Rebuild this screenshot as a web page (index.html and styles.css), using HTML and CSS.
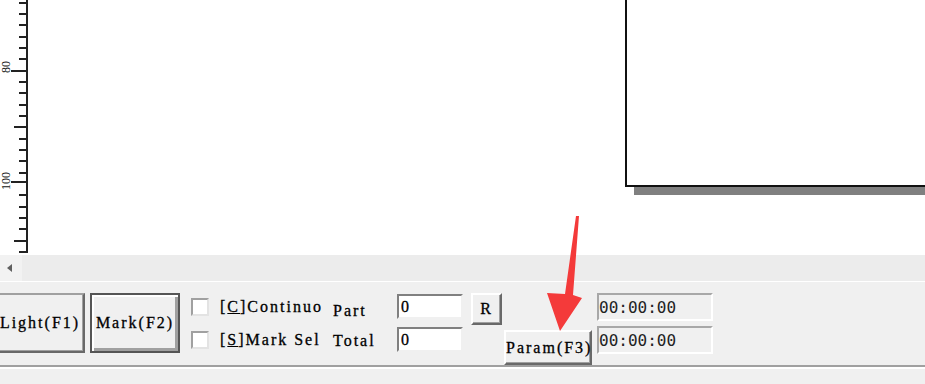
FILE: index.html
```html
<!DOCTYPE html>
<html lang="en">
<head>
<meta charset="UTF-8">
<title>Marking</title>
<link rel="stylesheet" href="styles.css">
</head>
<body>

<div class="canvas">
  <!-- vertical ruler -->
  <svg class="ruler" width="40" height="255" viewBox="0 0 40 255">
    <line x1="27" y1="0" x2="27" y2="253" stroke="#222" stroke-width="2"/>
    <g stroke="#222" stroke-width="2">
      <line x1="19" y1="3" x2="27" y2="3"/>
      <line x1="19" y1="14" x2="27" y2="14"/>
      <line x1="19" y1="25" x2="27" y2="25"/>
      <line x1="19" y1="37" x2="27" y2="37"/>
      <line x1="19" y1="48" x2="27" y2="48"/>
      <line x1="19" y1="59" x2="27" y2="59"/>
      <line x1="11" y1="71" x2="27" y2="71"/>
      <line x1="19" y1="82" x2="27" y2="82"/>
      <line x1="19" y1="93" x2="27" y2="93"/>
      <line x1="19" y1="105" x2="27" y2="105"/>
      <line x1="19" y1="116" x2="27" y2="116"/>
      <line x1="14" y1="127" x2="27" y2="127"/>
      <line x1="19" y1="139" x2="27" y2="139"/>
      <line x1="19" y1="150" x2="27" y2="150"/>
      <line x1="19" y1="161" x2="27" y2="161"/>
      <line x1="19" y1="173" x2="27" y2="173"/>
      <line x1="11" y1="182" x2="27" y2="182"/>
      <line x1="19" y1="195" x2="27" y2="195"/>
      <line x1="19" y1="207" x2="27" y2="207"/>
      <line x1="19" y1="218" x2="27" y2="218"/>
      <line x1="19" y1="229" x2="27" y2="229"/>
      <line x1="14" y1="241" x2="27" y2="241"/>
      <line x1="19" y1="252" x2="27" y2="252"/>
    </g>
    <text class="ruler-num" transform="translate(10 67) rotate(-90)">80</text>
    <text class="ruler-num" transform="translate(10 181) rotate(-90)">100</text>
  </svg>

  <div class="sheet"></div>
</div>

<div class="hscroll">
  <div class="scroll-btn"><span class="tri"></span></div>
</div>

<div class="panel">
  <button class="btn big light">Light(F1)</button>
  <button class="btn big default">Mark(F2)</button>

  <div class="checks">
    <label class="check"><span class="box"></span>[<u>C</u>]Continuo</label>
    <label class="check"><span class="box"></span>[<u>S</u>]Mark Sel</label>
  </div>

  <div class="counts">
    <span>Part</span>
    <span>Total</span>
  </div>

  <div class="fields">
    <input class="field" type="text" value="0">
    <input class="field" type="text" value="0">
  </div>

  <div class="actions">
    <button class="btn reset">R</button>
    <button class="btn param">Param(F3)</button>
  </div>

  <div class="times">
    <div class="time">00:00:00</div>
    <div class="time">00:00:00</div>
  </div>
</div>

<div class="status"></div>

<!-- red annotation arrow -->
<svg class="annotation" width="925" height="384" viewBox="0 0 925 384">
  <polygon points="576,216 579,216 573,295 582,298 560,331 547,293 565,294" fill="#f43a3a"/>
</svg>

</body>
</html>
```

FILE: styles.css
```css
/* Reset */
* {
  box-sizing: border-box;
  margin: 0;
  padding: 0;
}

body {
  width: 925px;
  height: 384px;
  overflow: hidden;
  position: relative;
  background: #f0f0f0;
  font-family: 'Liberation Serif', 'Times New Roman', serif;
  font-size: 16px;
  letter-spacing: 2px;
  color: #000;
  -webkit-text-stroke: 0.3px #000;
}

/* Drawing canvas */
.canvas {
  position: relative;
  height: 255px;
  background: #fff;
  overflow: hidden;
}

.ruler {
  position: absolute;
  left: 0;
  top: 0;
}

.ruler-num {
  font-family: 'Liberation Serif', serif;
  font-size: 12px;
  letter-spacing: 0;
  fill: #111;
  text-anchor: middle;
}

.sheet {
  position: absolute;
  left: 625px;
  top: -10px;
  width: 330px;
  height: 197px;
  background: #fff;
  border-left: 2px solid #111;
  border-bottom: 2px solid #111;
  box-shadow: 9px 8px 0 #808080;
}

/* Horizontal scroll bar */
.hscroll {
  height: 26px;
  background: #ececec;
  display: flex;
}

.scroll-btn {
  width: 22px;
  background: #f2f2f2;
  display: flex;
  align-items: center;
  justify-content: center;
}

.tri {
  width: 0;
  height: 0;
  border-top: 4px solid transparent;
  border-bottom: 4px solid transparent;
  border-right: 5px solid #606060;
  margin-left: -4px;
}

/* Control panel */
.panel {
  height: 86px;
  border-top: 1px solid #fff;
  border-bottom: 2px solid #a0a0a0;
  padding-top: 11px;
  display: flex;
  align-items: flex-start;
}

.btn {
  font-family: inherit;
  font-size: inherit;
  letter-spacing: inherit;
  color: #000;
  background: #f0f0f0;
  border: 2px solid;
  border-color: #fff #696969 #696969 #fff;
  box-shadow: inset -1px -1px 0 #a0a0a0;
  white-space: nowrap;
  padding: 0;
}

.big {
  width: 90px;
  height: 60px;
}

.light {
  margin-left: -5px;
  border-top-color: #a0a0a0;
}

.default {
  margin-left: 5px;
  outline: 2px solid #555;
  outline-offset: -2px;
  box-shadow: inset 2px 2px 0 #fff, inset -3px -3px 0 #a0a0a0;
}

/* Check boxes */
.checks {
  width: 142px;
  margin-left: 11px;
  padding-top: 5px;
  display: flex;
  flex-direction: column;
  gap: 15px;
}

.check {
  display: flex;
  align-items: center;
  height: 18px;
  white-space: nowrap;
}

.box {
  width: 18px;
  height: 18px;
  margin-right: 11px;
  background: #fff;
  border: 2px solid;
  border-color: #a0a0a0 #e3e3e3 #e3e3e3 #a0a0a0;
}

/* Counters */
.counts {
  width: 64px;
  padding-top: 3px;
  display: flex;
  flex-direction: column;
  line-height: 30px;
}

.fields {
  width: 66px;
  padding-top: 1px;
  display: flex;
  flex-direction: column;
  gap: 8px;
}

.field {
  width: 66px;
  height: 25px;
  font-family: inherit;
  font-size: inherit;
  padding-left: 2px;
  background: #fff;
  border: 2px solid;
  border-color: #808080 #f0f0f0 #f0f0f0 #808080;
  outline: none;
}

.actions {
  width: 121px;
  margin-left: 8px;
  display: flex;
  flex-direction: column;
  align-items: flex-start;
}

.reset {
  width: 31px;
  height: 32px;
}

.param {
  width: 88px;
  height: 35px;
  margin-left: 33px;
  margin-top: 5px;
}

/* Timers */
.times {
  margin-left: 5px;
  display: flex;
  flex-direction: column;
  gap: 5px;
}

.time {
  width: 116px;
  height: 28px;
  line-height: 25px;
  font-family: 'DejaVu Sans Mono', monospace;
  font-size: 16px;
  letter-spacing: 0;
  -webkit-text-stroke: 0;
  color: #222;
  background: #f0f0f0;
  border: 2px solid;
  border-color: #a8a8a8 #fff #fff #a8a8a8;
}

.status {
  border-top: 2px solid #fff;
}

.annotation {
  position: absolute;
  left: 0;
  top: 0;
  pointer-events: none;
}
```
